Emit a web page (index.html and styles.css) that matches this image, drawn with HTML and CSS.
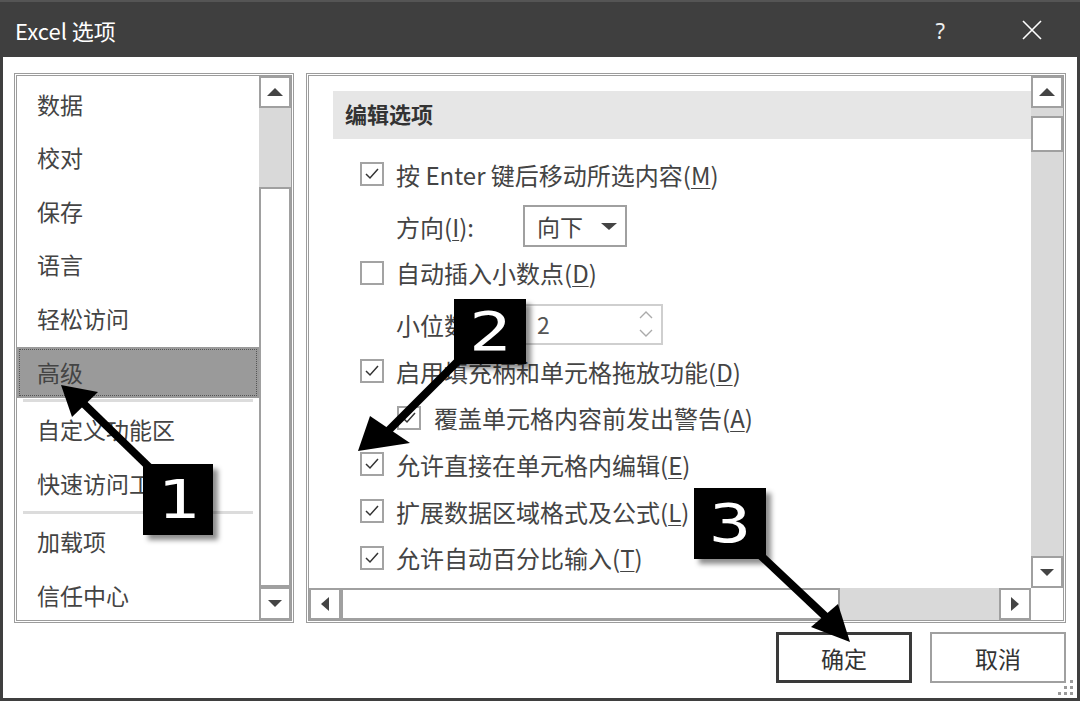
FILE: index.html
```html
<!DOCTYPE html>
<html lang="zh-CN">
<head>
<meta charset="utf-8">
<title>Excel 选项</title>
<link rel="stylesheet" href="styles.css">
</head>
<body>
<div class="window">
  <div class="titlebar">
    <span class="title">Excel 选项</span>
    <span class="help">?</span>
    <svg class="close" width="22" height="22" viewBox="0 0 22 22"><path d="M2 2 L20 20 M20 2 L2 20" stroke="#fff" stroke-width="1.6" fill="none"/></svg>
  </div>
  <div class="main">
    <div class="panels">
      <div class="panel left">
        <div class="list">
          <div class="item">数据</div>
          <div class="item">校对</div>
          <div class="item">保存</div>
          <div class="item">语言</div>
          <div class="item">轻松访问</div>
          <div class="item selected"><span class="focus">高级</span></div>
          <div class="sep"></div>
          <div class="item">自定义功能区</div>
          <div class="item">快速访问工具栏</div>
          <div class="sep"></div>
          <div class="item">加载项</div>
          <div class="item">信任中心</div>
        </div>
        <div class="vscroll">
          <div class="sbtn"><span class="tri up"></span></div>
          <div class="track lt"></div>
          <div class="thumb lthumb"></div>
          <div class="sbtn down-btn"><span class="tri down"></span></div>
        </div>
      </div>
      <div class="panel right">
        <div class="content">
          <div class="section">编辑选项</div>
          <div class="row"><span class="cb on"><svg viewBox="0 0 20 20"><polyline points="4,10 8,14 16,5"/></svg></span><span>按 Enter 键后移动所选内容(<u>M</u>)</span></div>
          <div class="row field"><span class="label">方向(<u>I</u>):</span><span class="select">向下<span class="tri down"></span></span></div>
          <div class="row"><span class="cb"></span><span>自动插入小数点(<u>D</u>)</span></div>
          <div class="row field"><span class="label">小位数(<u>P</u>):</span><span class="spin">2<span class="chev"><svg width="14" height="30" viewBox="0 0 14 30"><polyline points="1,9 7,3 13,9"/><polyline points="1,21 7,27 13,21"/></svg></span></span></div>
          <div class="row"><span class="cb on"><svg viewBox="0 0 20 20"><polyline points="4,10 8,14 16,5"/></svg></span><span>启用填充柄和单元格拖放功能(<u>D</u>)</span></div>
          <div class="row indent"><span class="cb on"><svg viewBox="0 0 20 20"><polyline points="4,10 8,14 16,5"/></svg></span><span>覆盖单元格内容前发出警告(<u>A</u>)</span></div>
          <div class="row"><span class="cb on"><svg viewBox="0 0 20 20"><polyline points="4,10 8,14 16,5"/></svg></span><span>允许直接在单元格内编辑(<u>E</u>)</span></div>
          <div class="row"><span class="cb on"><svg viewBox="0 0 20 20"><polyline points="4,10 8,14 16,5"/></svg></span><span>扩展数据区域格式及公式(<u>L</u>)</span></div>
          <div class="row"><span class="cb on"><svg viewBox="0 0 20 20"><polyline points="4,10 8,14 16,5"/></svg></span><span>允许自动百分比输入(<u>T</u>)</span></div>
        </div>
        <div class="vscroll rv">
          <div class="sbtn"><span class="tri up"></span></div>
          <div class="track rt1"></div>
          <div class="thumb rthumb"></div>
          <div class="track fill"></div>
          <div class="sbtn"><span class="tri down"></span></div>
        </div>
        <div class="hscroll">
          <div class="sbtn"><span class="tri lefttri"></span></div>
          <div class="thumb hthumb"></div>
          <div class="track fill"></div>
          <div class="sbtn"><span class="tri righttri"></span></div>
        </div>
        <div class="corner"></div>
      </div>
    </div>
    <div class="footer">
      <button class="btn primary">确定</button>
      <button class="btn">取消</button>
    </div>
    <svg class="grip" width="18" height="18" viewBox="0 0 18 18">
      <rect x="13" y="1" width="3" height="3"/>
      <rect x="7" y="7" width="3" height="3"/><rect x="13" y="7" width="3" height="3"/>
      <rect x="1" y="13" width="3" height="3"/><rect x="7" y="13" width="3" height="3"/><rect x="13" y="13" width="3" height="3"/>
    </svg>
  </div>

  <svg class="arrows" width="1080" height="701" viewBox="0 0 1080 701">
    <line x1="150" y1="468" x2="84" y2="404"/>
    <polygon points="61,385 72,417 98,392"/>
    <line x1="462" y1="357" x2="388" y2="431"/>
    <polygon points="358,451 370,416 410,443"/>
    <line x1="758" y1="553" x2="826" y2="617"/>
    <polygon points="850,642 811,627 838,604"/>
  </svg>
  <div class="badge b1"><span>1</span></div>
  <div class="badge b2"><span>2</span></div>
  <div class="badge b3"><span>3</span></div>
</div>
</body>
</html>
```

FILE: styles.css
```css
* { box-sizing: border-box; }
html, body { margin: 0; padding: 0; background: #fff; }
body {
  font-family: "Noto Sans CJK SC", "Noto Sans", sans-serif;
  color: #444;
}
.window {
  position: relative;
  width: 1080px;
  height: 701px;
  overflow: hidden;
  background: #fff;
}
.titlebar {
  height: 57px;
  background: #3f3f3f;
  border-top: 2px solid #555;
  display: flex;
  align-items: center;
  color: #fff;
  padding-left: 15px;
}
.title { font-size: 22px; line-height: 1; }
.help { margin-left: auto; font-size: 22px; font-family: "Noto Sans", sans-serif; color: #eee; margin-right: 76px; }
.close { margin-right: 37px; }

.main {
  position: relative;
  height: 644px;
  border: 3px solid #3f3f3f;
  border-top: 0;
  padding: 16px 11px 0 11px;
}
.panels { display: flex; gap: 12px; height: 550px; }
.panel {
  border: 3px double #9c9c9c;
  height: 550px;
}
.panel.left { width: 280px; display: flex; }
.list { flex: 1; padding-top: 1px; overflow: hidden; }
.item {
  height: 53.5px;
  display: flex;
  align-items: center;
  padding-left: 20px;
  font-size: 23px;
  color: #444;
  white-space: nowrap;
}
.item.selected {
  height: 51px;
  margin-top: 2px;
  background: #9a9a9a;
  margin-left: -1px;
  padding: 2px 2px 2px 3px;
}
.focus {
  flex: 1;
  height: 100%;
  border: 1px dotted #555;
  display: flex;
  align-items: center;
  padding-left: 17px;
}
.sep { height: 5px; margin: 0 6px 0 6px; display: flex; align-items: center; }
.sep::before { content: ""; flex: 1; height: 3px; background: #dcdcdc; }

.vscroll { width: 32px; display: flex; flex-direction: column; background: #d9d9d9; }
.sbtn {
  width: 32px;
  height: 32px;
  background: #fff;
  border: 2px solid #a0a0a0;
  display: flex;
  align-items: center;
  justify-content: center;
  flex: none;
}
.down-btn { height: 33px; }
.track { background: #d9d9d9; }
.lt { height: 79px; }
.thumb { background: #fff; border: 2px solid #a0a0a0; }
.lthumb { height: 400px; }
.fill { flex: 1; }
.rt1 { height: 8px; }
.rthumb { height: 36px; }

.tri { width: 0; height: 0; display: inline-block; }
.tri.up { border-left: 8px solid transparent; border-right: 8px solid transparent; border-bottom: 8px solid #444; }
.tri.down { border-left: 7px solid transparent; border-right: 7px solid transparent; border-top: 7px solid #444; }
.tri.lefttri { border-top: 7px solid transparent; border-bottom: 7px solid transparent; border-right: 8px solid #444; }
.tri.righttri { border-top: 7px solid transparent; border-bottom: 7px solid transparent; border-left: 8px solid #444; }

.panel.right {
  width: 760px;
  display: grid;
  grid-template-columns: 722px 32px;
  grid-template-rows: 512px 32px;
}
.content { padding: 15px 0 0 24px; overflow: hidden; }
.section {
  height: 48px;
  background: #e6e6e6;
  display: flex;
  align-items: center;
  padding-left: 12px;
  padding-bottom: 4px;
  font-size: 22px;
  font-weight: bold;
  color: #333;
  margin-bottom: 12px;
}
.row {
  height: 46.7px;
  display: flex;
  align-items: center;
  gap: 12px;
  padding-left: 27px;
  font-size: 24px;
  color: #444;
  white-space: nowrap;
}
.row u { text-decoration-thickness: 1px; text-underline-offset: 3px; }
.row.field { margin-top: 5px; padding-left: 63px; gap: 0; }
.row.indent { padding-left: 64px; gap: 13px; }
.cb {
  width: 24px;
  height: 24px;
  border: 2px solid #a3a3a3;
  background: #fff;
  flex: none;
  display: flex;
}
.cb svg { width: 20px; height: 20px; display: none; }
.cb.on svg { display: block; }
.cb polyline { fill: none; stroke: #333; stroke-width: 1.5; }
.label { width: 127px; }
.select {
  width: 104px;
  height: 42px;
  border: 2px solid #a0a0a0;
  display: flex;
  align-items: center;
  padding-left: 12px;
  font-size: 23px;
}
.select .tri { margin-left: auto; margin-right: 8px; border-left-width: 8px; border-right-width: 8px; border-top-width: 7px; }
.spin {
  width: 140px;
  height: 41px;
  border: 2px solid #cfcfcf;
  display: flex;
  align-items: center;
  padding-left: 12px;
  font-size: 23px;
  color: #555;
}
.chev { margin-left: auto; margin-right: 8px; display: flex; }
.chev polyline { fill: none; stroke: #aaa; stroke-width: 1.4; }

.hscroll { display: flex; background: #d9d9d9; }
.hthumb { width: 499px; height: 32px; }
.corner { background: #fff; }

.footer {
  display: flex;
  justify-content: flex-end;
  gap: 18px;
  margin-top: 9px;
}
.btn {
  width: 136px;
  height: 51px;
  background: #fff;
  border: 2px solid #a0a0a0;
  font-family: "Noto Sans CJK SC", sans-serif;
  font-size: 23px;
  color: #333;
  padding: 0;
}
.btn.primary { border: 3px solid #3a3a3a; }
.grip { position: absolute; right: 2px; bottom: 1px; fill: #9a9a9a; }

.arrows { position: absolute; left: 0; top: 0; pointer-events: none; }
.arrows line { stroke: #000; stroke-width: 8; }
.arrows polygon { fill: #000; }
.badge {
  position: absolute;
  background: #000;
  color: #fff;
  box-shadow: 5px 5px 5px rgba(0,0,0,0.45);
  display: flex;
  align-items: center;
  justify-content: center;
  font-family: "DejaVu Sans Mono", monospace;
  font-weight: normal;
  font-size: 54px;
  line-height: 1;
}
.badge span { display: inline-block; transform: scaleX(1.3); }
.b1 { left: 143px; top: 464px; width: 70px; height: 71px; }
.b2 { left: 454px; top: 299px; width: 72px; height: 65px; }
.b3 { left: 694px; top: 488px; width: 72px; height: 71px; }
```
